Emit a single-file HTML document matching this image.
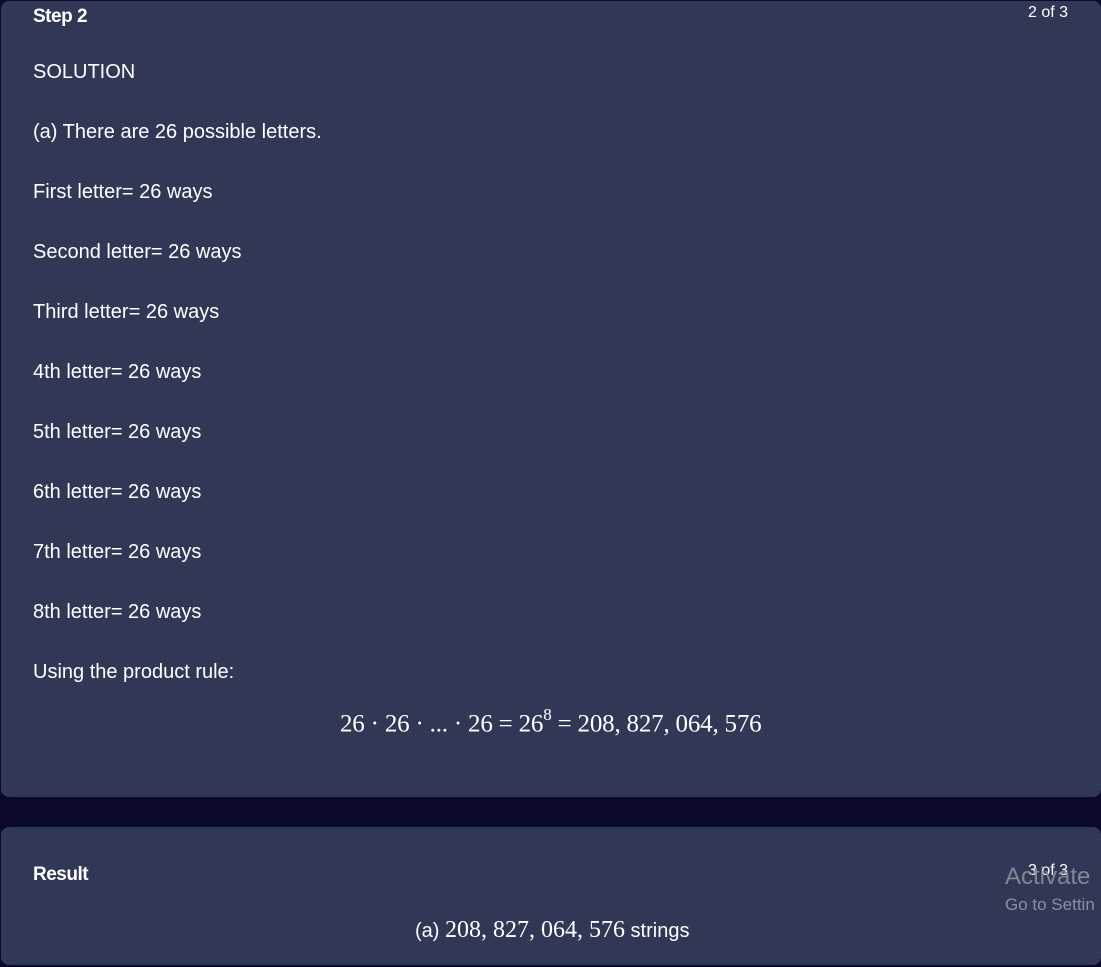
<!DOCTYPE html>
<html><head><meta charset="utf-8"><style>
html,body{margin:0;padding:0;background:#0b0a2c;width:1101px;height:967px;overflow:hidden;font-family:"Liberation Sans",sans-serif;color:#fff}
.card{position:absolute;left:1px;width:1100px;background:#303856;border-radius:8px}
.t{position:absolute;left:32px;font-size:20px;white-space:nowrap}
.b{font-weight:bold;font-size:19px;letter-spacing:-0.5px}
.r{position:absolute;right:33px;font-size:16px}
.m{font-family:"Liberation Serif",serif;font-size:25px;position:absolute;white-space:nowrap;letter-spacing:-0.2px}
</style></head><body>
<div class="card" style="top:1px;height:796px">
<div class="t b" style="top:5px">Step 2</div>
<div class="r" style="top:3px">2 of 3</div>
<div class="t" style="top:60px">SOLUTION</div>
<div class="t" style="top:120px">(a) There are 26 possible letters.</div>
<div class="t" style="top:180px">First letter= 26 ways</div>
<div class="t" style="top:240px">Second letter= 26 ways</div>
<div class="t" style="top:300px">Third letter= 26 ways</div>
<div class="t" style="top:360px">4th letter= 26 ways</div>
<div class="t" style="top:420px">5th letter= 26 ways</div>
<div class="t" style="top:480px">6th letter= 26 ways</div>
<div class="t" style="top:540px">7th letter= 26 ways</div>
<div class="t" style="top:600px">8th letter= 26 ways</div>
<div class="t" style="top:660px">Using the product rule:</div>
<div class="m" style="left:339px;top:706px">26 · 26 · ... · 26 = 26<sup style="font-size:17px;position:relative;top:-2px">8</sup> = 208, 827, 064, 576</div>
</div>
<div class="card" style="top:827px;height:138px">
<div class="t b" style="top:37px">Result</div>
<div class="r" style="top:35px">3 of 3</div>
<div style="position:absolute;left:414px;top:90px;font-size:20px;white-space:nowrap">(a) <span style="font-family:'Liberation Serif',serif;font-size:24px">208, 827, 064, 576</span> strings</div>
<div style="position:absolute;left:1004px;top:36px;font-size:24px;color:#8a8f9f;white-space:nowrap;opacity:.9">Activate</div>
<div style="position:absolute;left:1004px;top:68px;font-size:17px;color:#8a8f9f;white-space:nowrap">Go to Settin</div>
</div>
</body></html>
